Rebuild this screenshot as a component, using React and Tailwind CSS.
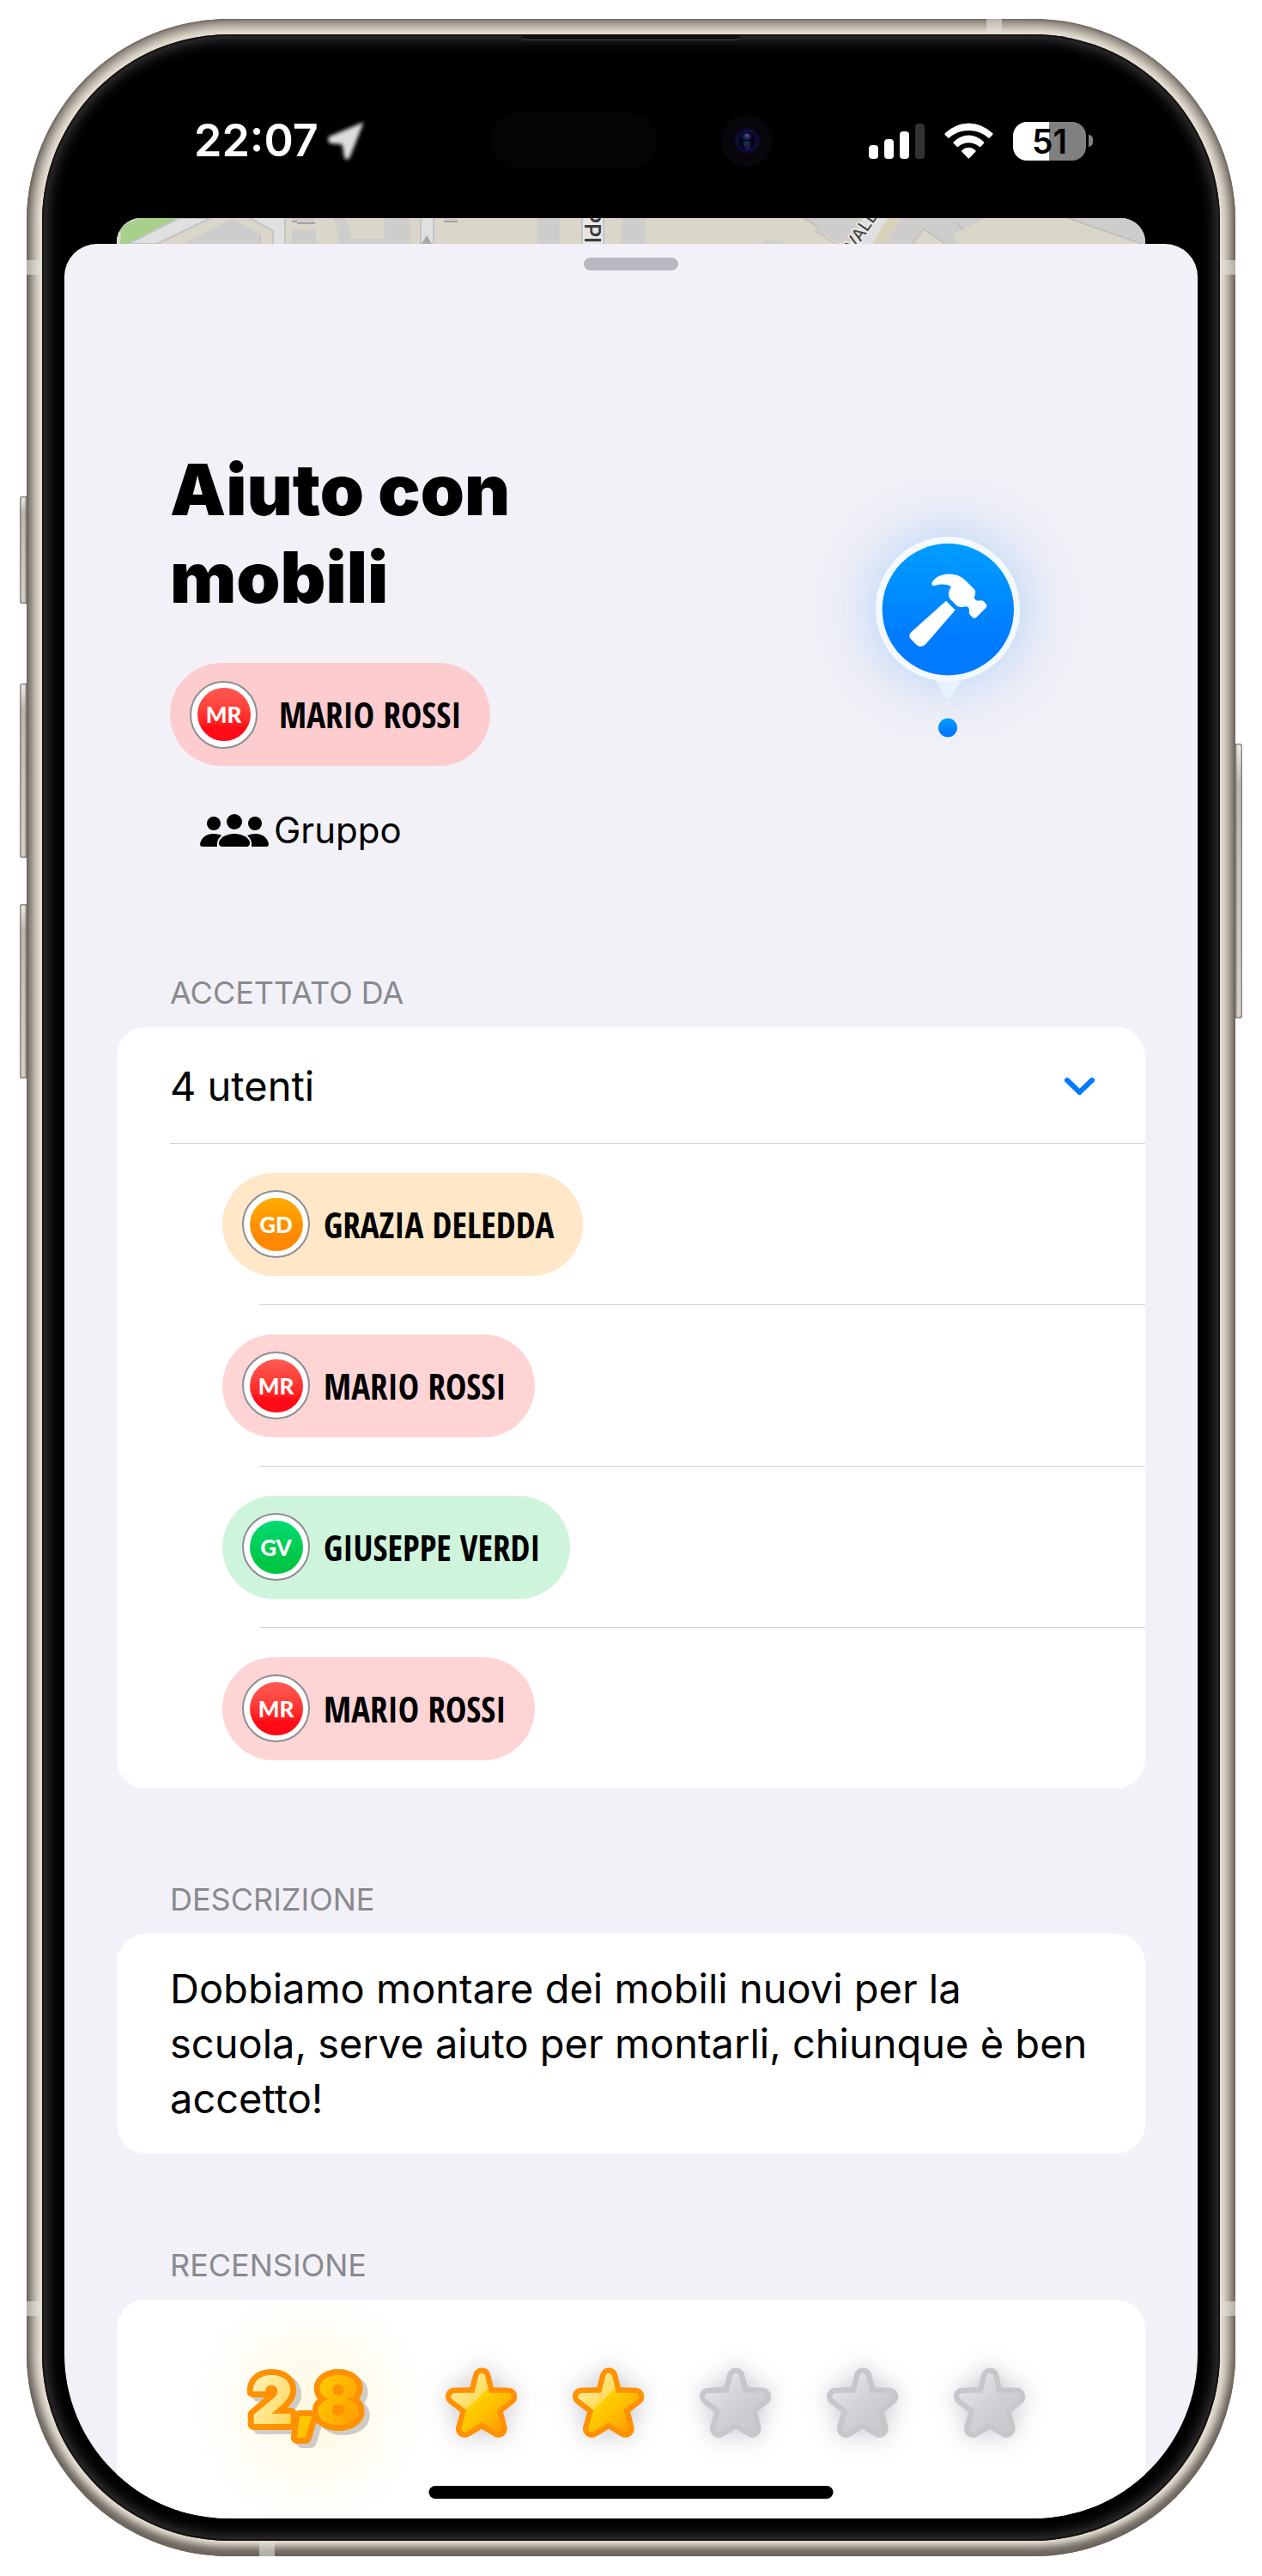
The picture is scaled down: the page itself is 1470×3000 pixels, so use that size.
import { useState } from "react";

const COLORS = {
  red: {
    chip: "bg-[#fed5d4]",
    dot: "bg-linear-to-b from-[#ff5a52] to-[#ff0a16] to-75%",
  },
  orange: {
    chip: "bg-[#ffe7c8]",
    dot: "bg-linear-to-b from-[#ffab00] to-[#ff8800] to-75%",
  },
  green: {
    chip: "bg-[#cff4dc]",
    dot: "bg-linear-to-b from-[#00dc72] to-[#00c646] to-75%",
  },
};

const USERS = [
  { initials: "GD", name: "GRAZIA DELEDDA", color: "orange" },
  { initials: "MR", name: "MARIO ROSSI", color: "red" },
  { initials: "GV", name: "GIUSEPPE VERDI", color: "green" },
  { initials: "MR", name: "MARIO ROSSI", color: "red" },
];

const STAR =
  "M880 110 L897 178 L973 180 L920 222 L938 293 L880 258 L820 293 L840 222 L784 180 L863 178 Z";

function UserChip({ user, chip, gap }) {
  const c = COLORS[user.color];
  return (
    <div
      className={`inline-flex h-[120px] items-center rounded-full pr-[34px] pl-[23px] ${gap} ${chip || c.chip}`}
    >
      <span className="flex size-[79px] items-center justify-center rounded-full border-2 border-[#8e8e93] bg-white">
        <span
          className={`flex size-[62px] items-center justify-center rounded-full font-["Lato"] text-[26px] leading-none font-black text-white ${c.dot}`}
        >
          {user.initials}
        </span>
      </span>
      <span className='font-["Open_Sans_Condensed","Roboto_Condensed",sans-serif] text-[41px] leading-[56px] font-bold whitespace-nowrap'>
        {user.name}
      </span>
    </div>
  );
}

function LocationArrow() {
  return (
    <svg viewBox="0 0 44 46" className="h-[46px] w-[44px] blur-[2px]" aria-hidden="true">
      <path d="M41 3 L3 19 Q1 23 4 25 L17 26 Q19 27 19 29 L21 42 Q23 46 26 41 Z" fill="#dcdcdc" stroke="#dcdcdc" strokeWidth="2" strokeLinejoin="round" />
    </svg>
  );
}

function StatusBar() {
  return (
    <header className="grid h-[188px] grid-cols-[1fr_auto_1fr] items-center pt-2 text-white">
      <div className="flex items-center gap-[10px] pl-[151px]">
        <time className="text-[52px] leading-[60px] font-semibold">22:07</time>
        <LocationArrow />
      </div>
      <div className="flex items-center gap-[75px]">
        <span className="h-[66px] w-[194px] rounded-full bg-[#040404]" />
        <span className="flex size-[60px] items-center justify-center rounded-full bg-[#08060b]">
          <svg viewBox="0 0 32 32" className="size-8" aria-hidden="true">
            <circle cx="16" cy="16" r="15" fill="#0a0b2c" />
            <circle cx="16" cy="16" r="11" fill="#05051a" stroke="#131b4a" />
            <ellipse cx="16" cy="11" rx="5" ry="4" fill="#23245e" />
            <circle cx="16" cy="10" r="2" fill="#4d4e8c" />
            <circle cx="16" cy="20" r="4" fill="#0c3344" />
            <circle cx="17" cy="24" r="3" fill="#2c0f4e" />
          </svg>
        </span>
      </div>
      <div className="flex items-center justify-end pr-[122px]">
        <div className="flex h-[42px] items-end gap-[7px]">
          <span className="h-4 w-[11px] rounded-[4px] bg-white" />
          <span className="h-[23px] w-[11px] rounded-[4px] bg-white" />
          <span className="h-8 w-[11px] rounded-[4px] bg-white" />
          <span className="h-[41px] w-[11px] rounded-[4px] bg-[#333]" />
        </div>
        <svg viewBox="299 48 173 127" className="ml-[23px] h-[42px] w-[57px]" fill="#fff" aria-hidden="true">
          <path d="M301 85 Q338 49 385 49 T470 85 Q472 88 469 91 L459 101 Q456 103 453 100 Q424 75 385 75 T317 100 Q314 103 312 101 L302 91 Q299 88 301 85Z" />
          <path d="M331 116 Q356 92 385 92 T439 116 Q441 118 439 120 L428 132 Q425 134 422 132 Q406 118 385 118 T348 132 Q345 134 343 132 L331 120 Q329 118 331 116Z" />
          <path d="M361 145 Q372 135 385 135 T409 145 Q411 148 409 150 L388 172 Q385 176 382 172 L361 150 Q359 148 361 145Z" />
        </svg>
        <span className="ml-[23px] flex h-[45px] w-[85px] items-center justify-center rounded-[16px] bg-linear-to-r from-white from-50% to-[#808080] to-50% text-[39px] leading-none font-semibold text-black">
          51
        </span>
        <span className="ml-[3px] h-[14px] w-[5px] rounded-r-full bg-[#808080]" />
      </div>
    </header>
  );
}

function MapStrip() {
  return (
    <svg
      viewBox="0 0 1198 30"
      preserveAspectRatio="xMidYMid slice"
      className="block h-[30px] w-full rounded-t-[28px]"
      aria-hidden="true"
    >
      <rect width="1198" height="30" fill="#dad6ca" />
      <path d="M0 0H72L14 30H0Z" fill="#a8d08b" />
      <path d="M0 0H28Q10 4 3 14 Q7 22 3 30H0Z" fill="#dcdcd6" />
      <path d="M72 0H109L47 30H14Z" fill="#e0e0e0" stroke="#c1c5c6" strokeWidth="2" />
      <path d="M129 3 Q134 0 139 3L167 19V30H77Z" fill="#cfcdcb" />
      <path d="M167 19V30" stroke="#b9b7b4" />
      <path d="M154 -2H196V32H182V15L152 -2Z" fill="#e0e0e0" stroke="#c1c5c6" strokeWidth="2" />
      <path d="M204 0H231V6H210V4H204Z" fill="#cfcdcb" />
      <path d="M204 4H210M210 6H231" stroke="#a3a19f" strokeWidth="2" />
      <path d="M204 14H232V30H204Z M252 0H265L272 12V24H312V0H341V30H258Q258 10 252 0Z" fill="#cfcdcb" />
      <path d="M354 -2H369V32H354Z" fill="#e0e0e0" stroke="#c1c5c6" strokeWidth="2" />
      <path d="M361 20L367 30H355Z" fill="#a8a8a8" />
      <path d="M381 0H397V4H381Z" fill="#cfcdcb" />
      <path d="M381 4H397" stroke="#a3a19f" strokeWidth="2" />
      <path d="M490 0H516V30H490Z M588 0H616V30H588Z" fill="#cfcdcb" />
      <path d="M542 -2H567V32H542Z" fill="#e3e3e3" stroke="#c1c5c6" strokeWidth="2" />
      <text
        transform="translate(545 -10) rotate(90)"
        fontFamily="Inter, sans-serif"
        fontSize="25"
        fontWeight="600"
        fill="#3c3c3c"
        stroke="#ececec"
        strokeWidth="4"
        paintOrder="stroke"
      >
        PPI
      </text>
      <path d="M749 30L761 24L779 30Z M800 0H868L845 30L814 15L818 11Z" fill="#cfcdcb" />
      <path d="M800 0L818 11L814 15L838 30" fill="none" stroke="#b5b3b0" />
      <path d="M868 0H914L894 30H846Z" fill="#d9d2bb" />
      <path d="M870 0H898L880 30H854Z" fill="#e0e0e0" />
      <path d="M914 0H1198V30H894Z" fill="#cfcdcb" />
      <path d="M927 30L940 13L965 30Z M976 18L1012 0H1108L1194 30H978Z" fill="#dad6ca" />
      <path d="M927 30L940 13L965 30M978 4L986 15M1108 0L1194 30" fill="none" stroke="#b0aeac" />
      <text
        transform="translate(859 39) rotate(-56)"
        fontFamily="Inter, sans-serif"
        fontSize="20"
        fontWeight="500"
        fill="#4a4a4a"
        stroke="#ececec"
        strokeWidth="3"
        paintOrder="stroke"
      >
        VALE
      </text>
    </svg>
  );
}

function GroupIcon() {
  return (
    <svg viewBox="0 0 80 38" className="h-[38px] w-[80px]" aria-hidden="true">
      <circle cx="40" cy="9" r="9" />
      <circle cx="16" cy="11" r="8" />
      <circle cx="64" cy="11" r="8" />
      <path d="M26 38Q22 38 22 34C22 28 30 23 40 23S58 28 58 34Q58 38 54 38Z" />
      <path d="M3 38Q0 38 0 35C1 28 7 23 15 23Q21 23 25 25Q19 30 20 38Z" />
      <path d="M77 38Q80 38 80 35C79 28 73 23 65 23Q59 23 55 25Q61 30 60 38Z" />
    </svg>
  );
}

function HammerPin() {
  return (
    <div className="relative mt-[105px] h-[234px] w-[168px] shrink-0">
      <div className="absolute inset-x-0 top-0 size-[168px] rounded-full shadow-[0_0_50px_rgba(60,155,255,0.24),0_0_120px_rgba(90,170,255,0.22)]" />
      <svg viewBox="119 75 506 702" className="relative h-[234px] w-[168px]" role="img" aria-label="Martello">
        <defs>
          <linearGradient id="pinFill" x1="0" y1="0" x2="0" y2="1">
            <stop offset="0" stopColor="#009eff" />
            <stop offset="0.75" stopColor="#007aff" />
          </linearGradient>
        </defs>
        <path d="M328 578H421L382 639Q374 650 366 639Z" fill="#e6f2fe" />
        <circle cx="372" cy="328" r="253" fill="#f4f9fe" />
        <circle cx="373" cy="329" r="231" fill="url(#pinFill)" />
        <path
          d="M316 238C320 222 345 205 376 205C402 205 420 214 436 229L464 257C471 265 469 274 466 283Q463 292 472 297Q480 299 487 297Q495 296 501 303L507 311Q512 317 506 323L473 356Q466 363 459 357L450 348Q445 342 447 334Q448 326 444 321Q438 316 428 320Q414 323 404 316L382 294Q374 286 375 270Q377 260 384 248Q360 236 328 245Q314 247 316 238Z"
          fill="#fff"
        />
        <path d="M366 299L398 331L295 450Q279 467 262 453L242 432Q232 420 244 408Z" fill="#fff" />
        <circle cx="372" cy="744" r="33" fill="url(#pinFill)" />
      </svg>
    </div>
  );
}

function Star({ filled }) {
  const paint = filled ? "url(#starGold)" : "url(#starGray)";
  return (
    <svg
      viewBox="750 75 256 252"
      className="h-[84px] w-[85px] shrink-0 overflow-visible drop-shadow-[0_0_14px_rgba(60,60,90,0.28)]"
      aria-hidden="true"
    >
      <g strokeLinejoin="round">
        <path d={STAR} fill="none" stroke={filled ? "#ff9100" : "#c7c6cb"} strokeWidth="62" />
        <path d={STAR} fill={paint} stroke={paint} strokeWidth="24" />
      </g>
    </svg>
  );
}

function Score() {
  return (
    <svg viewBox="0 0 140 92" className="h-[92px] w-[140px] shrink-0 overflow-visible" role="img" aria-label="2,8">
      <defs>
        <linearGradient id="scoreFill" gradientUnits="userSpaceOnUse" x1="10" y1="8" x2="128" y2="70">
          <stop offset="0" stopColor="#ffefb4" />
          <stop offset="0.4" stopColor="#ffdb66" />
          <stop offset="0.5" stopColor="#ffcc00" />
          <stop offset="1" stopColor="#ff9a00" />
        </linearGradient>
        <linearGradient id="starGold" gradientUnits="userSpaceOnUse" x1="780" y1="110" x2="960" y2="300">
          <stop offset="0" stopColor="#fff0b8" />
          <stop offset="0.43" stopColor="#ffdc5c" />
          <stop offset="0.45" stopColor="#ffcf00" />
          <stop offset="0.6" stopColor="#ffc400" />
          <stop offset="1" stopColor="#ff9800" />
        </linearGradient>
        <linearGradient id="starGray" gradientUnits="userSpaceOnUse" x1="780" y1="110" x2="960" y2="300">
          <stop offset="0" stopColor="#e8e9ee" />
          <stop offset="0.5" stopColor="#d2d1d6" />
          <stop offset="1" stopColor="#c8c7cc" />
        </linearGradient>
      </defs>
      <g fontFamily="Inter, sans-serif" fontSize="77" fontWeight="900" strokeLinejoin="round">
        <text x="2" y="67" fill="#cfccc8" stroke="#cfccc8" strokeWidth="14" transform="translate(6 5)" aria-hidden="true">
          2,8
        </text>
        <text x="2" y="67" fill="url(#scoreFill)" stroke="#ff9100" strokeWidth="14" paintOrder="stroke">
          2,8
        </text>
      </g>
    </svg>
  );
}

function SectionTitle({ children }) {
  return <h2 className="mb-[18px] px-[62px] text-[36px] leading-[44px] text-[#8a8a8e]">{children}</h2>;
}

function PhoneHardware() {
  const button =
    "absolute w-2 bg-linear-to-b from-[#f0ede8] via-[#bdb8b0] via-15% to-[#d6d2ca] shadow-[inset_0_0_2px_1px_#6b665f]";
  const band = "absolute bg-[#e2dfdb]/60";
  return (
    <div aria-hidden="true">
      <span className={`${button} top-[556px] -left-2 h-[125px] rounded-l-[3px]`} />
      <span className={`${button} top-[774px] -left-2 h-[203px] rounded-l-[3px]`} />
      <span className={`${button} top-[1031px] -left-2 h-[203px] rounded-l-[3px]`} />
      <span className={`${button} top-[844px] -right-2 h-[320px] rounded-r-[3px]`} />
      <span className={`${band} top-[281px] left-0 h-[17px] w-[18px]`} />
      <span className={`${band} top-[281px] right-0 h-[17px] w-[18px]`} />
      <span className={`${band} bottom-[280px] left-0 h-[17px] w-[18px]`} />
      <span className={`${band} right-0 bottom-[280px] h-[17px] w-[18px]`} />
      <span className={`${band} top-0 right-[272px] h-[18px] w-[18px]`} />
      <span className={`${band} bottom-0 left-[271px] h-[18px] w-[18px]`} />
    </div>
  );
}

export default function App() {
  const [open, setOpen] = useState(true);
  return (
    <main className='min-h-screen bg-white px-[31px] py-[22px] font-["Inter",sans-serif] text-black'>
      <div className="relative rounded-[236px] bg-[#f2ebdf] p-[18px] shadow-[inset_0_0_2px_1px_#6a645c,inset_0_0_16px_7px_#69635b,inset_0_-8px_8px_2px_#7a746b]">
        <PhoneHardware />
        <div className="relative rounded-[218px] bg-black p-[26px] shadow-[inset_0_0_0_2px_#15130f,inset_0_0_18px_3px_#4a4a4a]">
          <span className="absolute top-0 left-1/2 h-[7px] w-[256px] -translate-x-1/2 rounded-b-[6px] border-b border-[#444] bg-[#101010]" />
          <div className="relative overflow-hidden rounded-[192px] bg-black">
            <StatusBar />
            <div className="px-[61px]">
              <MapStrip />
            </div>

            <div className="rounded-t-[38px] bg-[#f2f1f7] px-[61px] pt-4">
              <div className="mx-auto h-[15px] w-[110px] rounded-full bg-[#b8b8c0]" />

              <section className="mt-[205px] flex items-start justify-between pr-[146px] pl-[62px]">
                <div>
                  <h1 className="w-[480px] text-[82px] leading-[102px] font-black">Aiuto con mobili</h1>
                  <div className="mt-12">
                    <UserChip user={USERS[1]} chip="bg-[#fccccf]" gap="gap-[25px]" />
                  </div>
                  <p className="mt-12 flex items-center gap-[6px] pl-[35px] text-[42px] leading-[54px]">
                    <GroupIcon />
                    Gruppo
                  </p>
                </div>
                <HammerPin />
              </section>

              <section className="mt-[140px]">
                <SectionTitle>ACCETTATO DA</SectionTitle>
                <div className="rounded-[34px] bg-white">
                  <button
                    type="button"
                    aria-expanded={open}
                    onClick={() => setOpen(!open)}
                    className="flex h-[135px] w-full items-center justify-between pt-[3px] pr-[59px] pl-[62px] text-left text-[47px] leading-[64px]"
                  >
                    4 utenti
                    <svg viewBox="0 0 35 20" className="h-5 w-[35px]" fill="none" aria-hidden="true">
                      <path d="M3 3L17.500 17L32 3" stroke="#007aff" strokeWidth="6" strokeLinecap="round" strokeLinejoin="round" />
                    </svg>
                  </button>
                  {open && (
                    <ul>
                      {USERS.map((user, i) => (
                        <li key={i}>
                          <div className={`h-px bg-[#cfcfd1] ${i === 0 ? "ml-[62px]" : "ml-[166px]"}`} />
                          <div className="flex h-[187px] items-center pl-[123px]">
                            <UserChip user={user} gap="gap-4" />
                          </div>
                        </li>
                      ))}
                    </ul>
                  )}
                </div>
              </section>

              <section className="mt-[107px]">
                <SectionTitle>DESCRIZIONE</SectionTitle>
                <p className="rounded-[34px] bg-white px-[62px] py-8 text-[47px] leading-[64px]">
                  Dobbiamo montare dei mobili nuovi per la scuola, serve aiuto per montarli, chiunque è ben accetto!
                </p>
              </section>

              <section className="mt-[108px]">
                <SectionTitle>RECENSIONE</SectionTitle>
                <div className="flex h-[255px] items-start justify-center gap-[63px] rounded-t-[34px] bg-white bg-[radial-gradient(circle_at_225px_125px,#fff9e2_0,#fffcf0_70px,#fffefb_115px,#ffffff_155px)] pt-[78px] pl-[15px]">
                  <span className="mr-[25px]">
                    <Score />
                  </span>
                  <Star filled />
                  <Star filled />
                  <Star />
                  <Star />
                  <Star />
                </div>
              </section>
            </div>
            <div className="absolute bottom-[23px] left-1/2 h-[15px] w-[471px] -translate-x-1/2 rounded-full bg-black" />
          </div>
        </div>
      </div>
    </main>
  );
}
